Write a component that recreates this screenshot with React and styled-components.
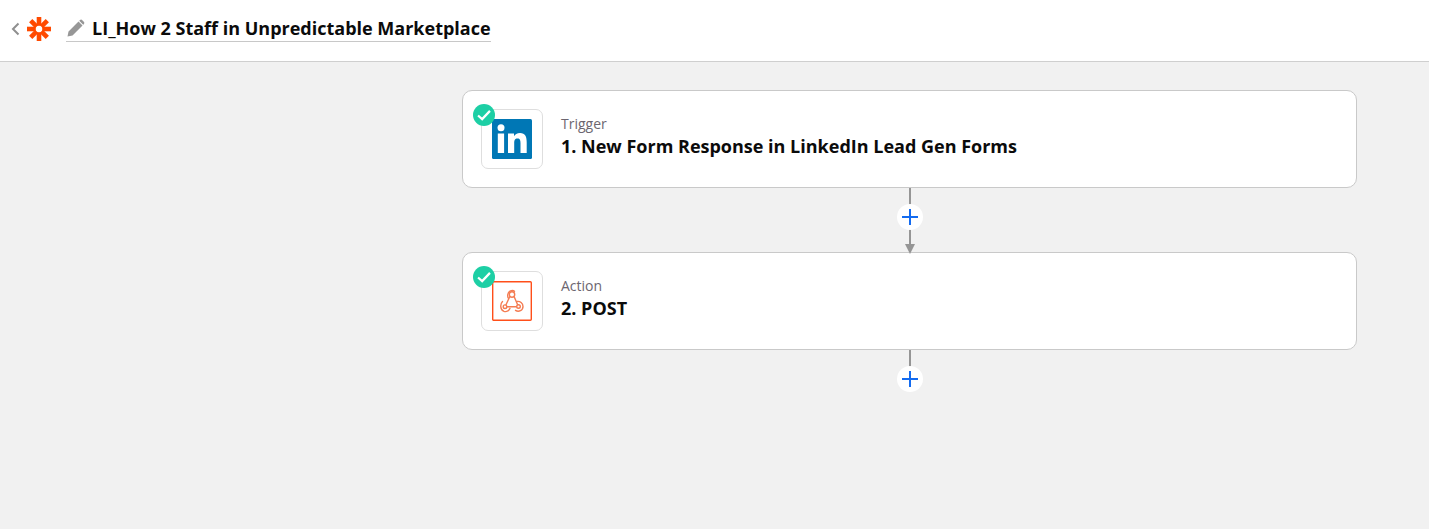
import React from 'react';
import styled, { createGlobalStyle } from 'styled-components';

const GlobalStyle = createGlobalStyle`
    html, body {
        margin: 0;
        padding: 0;
        height: 100%;
        background: #f1f1f1;
        font-family: "Open Sans", "Noto Sans", sans-serif;
        overflow: hidden;
    }
`;

const Page = styled.div`
    height: 529px;
    display: flex;
    flex-direction: column;
`;

const Header = styled.header`
    height: 62px;
    box-sizing: border-box;
    flex-shrink: 0;
    display: flex;
    align-items: center;
    padding: 0 0 4px 11px;
    background: #fff;
    border-bottom: 1px solid #cfcfcf;
`;

const BackButton = styled.button`
    display: flex;
    padding: 0;
    border: none;
    background: none;
    width: 16px;
    margin-right: 0;
`;

const Logo = styled.svg`
    width: 24px;
    height: 24px;
    margin: 1px 15px 0 0;
`;

const TitleField = styled.div`
    display: flex;
    align-items: center;
    height: 27px;
    margin-top: -1px;
    border-bottom: 1px solid #c8c8c8;
`;

const PencilIcon = styled.svg`
    width: 18px;
    height: 18px;
    margin: 0 7px 0 1px;
`;

const Title = styled.h1`
    margin: 0;
    font-size: 18px;
    line-height: 24px;
    font-weight: 700;
    color: #0b0b0b;
`;

const Canvas = styled.main`
    flex: 1;
    padding: 28px 0 0 462px;
`;

const Flow = styled.div`
    width: 895px;
    display: flex;
    flex-direction: column;
`;

const StepCard = styled.section`
    height: 98px;
    box-sizing: border-box;
    display: flex;
    align-items: center;
    gap: 18px;
    padding: 0 18px;
    background: #fff;
    border: 1px solid #c9c9c9;
    border-radius: 10px;
`;

const AppTile = styled.div`
    position: relative;
    width: 62px;
    height: 60px;
    box-sizing: border-box;
    display: flex;
    align-items: center;
    justify-content: center;
    background: #fff;
    border: 1px solid #dedede;
    border-radius: 7px;
`;

const CheckBadge = styled.svg`
    position: absolute;
    top: -6px;
    left: -9px;
    width: 22px;
    height: 22px;
`;

const StepText = styled.div`
    display: flex;
    flex-direction: column;
    margin-bottom: 4px;
`;

const StepType = styled.span`
    font-size: 14px;
    line-height: 18px;
    color: #6c6670;
`;

const StepName = styled.span`
    font-size: 18px;
    line-height: 26px;
    font-weight: 700;
    color: #0b0b0b;
`;

const Connector = styled.div`
    position: relative;
    height: ${props => props.$height}px;
    display: flex;
    justify-content: center;
`;

const Line = styled.div`
    width: 2px;
    height: 100%;
    background: #959595;
`;

const AddButton = styled.button`
    position: absolute;
    top: 16px;
    left: 50%;
    transform: translateX(-50%);
    width: 26px;
    height: 26px;
    padding: 0;
    display: flex;
    align-items: center;
    justify-content: center;
    border: none;
    border-radius: 50%;
    background: #fff;
`;

const ArrowHead = styled.div`
    position: absolute;
    bottom: -2px;
    left: 50%;
    transform: translateX(-50%);
    width: 0;
    height: 0;
    border-left: 5px solid transparent;
    border-right: 5px solid transparent;
    border-top: 10px solid #959595;
`;

const ZapierLogo = () => (
    <Logo viewBox="0 0 24 24">
        <g stroke="#ff4a00" strokeWidth="4.6">
            <line x1="12" y1="0" x2="12" y2="8.800" />
            <line x1="12" y1="15.200" x2="12" y2="24" />
            <line x1="0" y1="12" x2="8.800" y2="12" />
            <line x1="15.200" y1="12" x2="24" y2="12" />
            <line x1="3.700" y1="3.700" x2="9.700" y2="9.700" />
            <line x1="14.300" y1="14.300" x2="20.300" y2="20.300" />
            <line x1="20.300" y1="3.700" x2="14.300" y2="9.700" />
            <line x1="9.700" y1="14.300" x2="3.700" y2="20.300" />
        </g>
    </Logo>
);

const LinkedInIcon = () => (
    <svg width="40" height="40" viewBox="0 0 40 40">
        <rect width="40" height="40" rx="1.5" fill="#0077b5" />
        <circle cx="9" cy="8.800" r="3.500" fill="#fff" />
        <rect x="5.800" y="14.500" width="6.300" height="19.500" fill="#fff" />
        <path
            fill="#fff"
            d="M16 14.500h6v2.700c1-1.700 3-3.200 6-3.200 5.300 0 6.700 3.500 6.700 8.900V34h-6.200v-10c0-2.500-.5-4.600-3-4.600-2.700 0-3.300 2.100-3.300 4.600V34H16z"
        />
    </svg>
);

const WebhookIcon = () => (
    <svg width="40" height="40" viewBox="0 0 40 40">
        <rect x="0.700" y="0.700" width="38.600" height="38.600" rx="1" fill="#fff" stroke="#ff4f1a" strokeWidth="1.400" />
        <g fill="none" stroke="#f47c52" strokeWidth="1.400" strokeLinecap="round">
            <circle cx="20" cy="13.500" r="2.700" />
            <circle cx="13" cy="25.700" r="1.800" />
            <circle cx="26.500" cy="25.500" r="1.800" />
            <path d="M17.700 15.800 14 23.800" />
            <path d="M22.200 15.800 25.500 23.500" />
            <path d="M15.200 25.700H24.200" />
            <path d="M10.500 20.500C8 23 8 29 12 30.300c2.800.8 5.300-.8 6-3" />
            <path d="M25 20.500c3-.5 6 1.700 6 5 0 3.800-4.300 6-7.500 3.800" />
            <path d="M16.500 17.500c-1.500-2.500-.8-6 1.500-7.300 1.500-.8 3.500-.8 4.500 0" />
        </g>
    </svg>
);

const steps = [
    { id: 1, type: 'Trigger', name: '1. New Form Response in LinkedIn Lead Gen Forms', icon: <LinkedInIcon /> },
    { id: 2, type: 'Action', name: '2. POST', icon: <WebhookIcon /> },
];

const Plus = () => (
    <svg width="16" height="16" viewBox="0 0 16 16">
        <path d="M8 0v16M0 8h16" stroke="#136bf0" strokeWidth="2" />
    </svg>
);

const App = () => (
    <Page>
        <GlobalStyle />
        <Header>
            <BackButton>
                <svg width="9" height="14" viewBox="0 0 9 14">
                    <path d="M7.500 1.500 2 7l5.500 5.500" fill="none" stroke="#8f8f8f" strokeWidth="2" />
                </svg>
            </BackButton>
            <ZapierLogo />
            <TitleField>
                <PencilIcon viewBox="0 0 18 18">
                    <path
                        fill="#979797"
                        d="M0.500 17.500 1.500 12.500 11.500 2.500 15.500 6.500 5.500 16.500zM12.800 1.200c.8-.8 1.800-.8 2.500 0l1.500 1.500c.7.700.7 1.700 0 2.500l-.6.600-4-4z"
                    />
                </PencilIcon>
                <Title>LI_How 2 Staff in Unpredictable Marketplace</Title>
            </TitleField>
        </Header>
        <Canvas>
            <Flow>
                {steps.map((step, index) => (
                    <React.Fragment key={step.id}>
                        <StepCard>
                            <AppTile>
                                {step.icon}
                                <CheckBadge viewBox="0 0 24 24">
                                    <circle cx="12" cy="12" r="12" fill="#1dcfa5" />
                                    <path d="M5.500 12.500 10 16.500 18.500 7.500" fill="none" stroke="#fff" strokeWidth="2.400" />
                                </CheckBadge>
                            </AppTile>
                            <StepText>
                                <StepType>{step.type}</StepType>
                                <StepName>{step.name}</StepName>
                            </StepText>
                        </StepCard>
                        <Connector $height={index === 0 ? 64 : 20}>
                            <Line />
                            <AddButton><Plus /></AddButton>
                            {index === 0 && <ArrowHead />}
                        </Connector>
                    </React.Fragment>
                ))}
            </Flow>
        </Canvas>
    </Page>
);

export default App;
